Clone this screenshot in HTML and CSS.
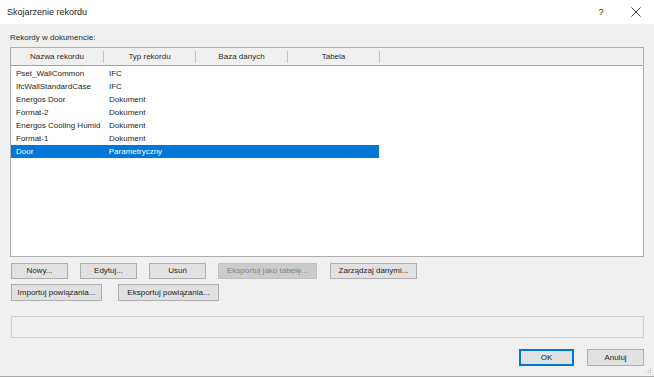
FILE: index.html
```html
<!DOCTYPE html>
<html lang="pl">
<head>
  <meta charset="UTF-8" />
  <title>Skojarzenie rekordu</title>
  <link rel="stylesheet" href="styles.css">
</head>
<body>
  <div class="window">
    <div class="titlebar">
      <span class="title">Skojarzenie rekordu</span>
      <span class="help">?</span>
      <span class="close">
        <svg width="10" height="10" viewBox="0 0 10 10">
          <path d="M0.5 0.5 L9.5 9.5 M9.5 0.5 L0.5 9.5" stroke="#222" stroke-width="0.9" fill="none"/>
        </svg>
      </span>
    </div>

    <div class="content">
      <div class="label">Rekordy w dokumencie:</div>

      <div class="listview">
        <div class="lv-header">
          <div class="col c1">Nazwa rekordu</div>
          <div class="col">Typ rekordu</div>
          <div class="col">Baza danych</div>
          <div class="col">Tabela</div>
        </div>
        <div class="lv-rows">
          <div class="row"><div class="cell c1">Pset_WallCommon</div><div class="cell">IFC</div></div>
          <div class="row"><div class="cell c1">IfcWallStandardCase</div><div class="cell">IFC</div></div>
          <div class="row"><div class="cell c1">Energos Door</div><div class="cell">Dokument</div></div>
          <div class="row"><div class="cell c1">Format-2</div><div class="cell">Dokument</div></div>
          <div class="row"><div class="cell c1">Energos Cooling Humid</div><div class="cell">Dokument</div></div>
          <div class="row"><div class="cell c1">Format-1</div><div class="cell">Dokument</div></div>
          <div class="row selected"><div class="cell c1">Door</div><div class="cell">Parametryczny</div><div class="cell"></div><div class="cell"></div></div>
        </div>
      </div>

      <div class="btn-row first">
        <button class="btn w57">Nowy...</button>
        <button class="btn w57">Edytuj...</button>
        <button class="btn w57">Usuń</button>
        <button class="btn w99" disabled>Eksportuj jako tabelę...</button>
        <button class="btn w87 push">Zarządzaj danymi...</button>
      </div>

      <div class="btn-row second">
        <button class="btn w91">Importuj powiązania...</button>
        <button class="btn w101">Eksportuj powiązania...</button>
      </div>

      <div class="status"></div>

      <div class="dialog-buttons">
        <button class="btn default">OK</button>
        <button class="btn cancel">Anuluj</button>
      </div>

      <svg class="grip" width="7" height="7" viewBox="0 0 7 7">
        <rect x="5" y="1" width="1" height="1" fill="#b8b8b8"/>
        <rect x="3" y="3" width="1" height="1" fill="#b8b8b8"/>
        <rect x="5" y="3" width="1" height="1" fill="#b8b8b8"/>
        <rect x="1" y="5" width="1" height="1" fill="#b8b8b8"/>
        <rect x="3" y="5" width="1" height="1" fill="#b8b8b8"/>
        <rect x="5" y="5" width="1" height="1" fill="#b8b8b8"/>
      </svg>
    </div>
  </div>
</body>
</html>
```

FILE: styles.css
```css
html, body {
  margin: 0;
  padding: 0;
  background-color: #ffffff;
  font-family: "Liberation Sans", Arial, sans-serif;
  font-size: 8px;
  color: #1e1e1e;
  overflow: hidden;
}

.window {
  width: 654px;
  height: 376px;
  display: flex;
  flex-direction: column;
  border-bottom: 1px solid #a9a9a9;
}

.titlebar {
  height: 24px;
  flex: none;
  display: flex;
  align-items: center;
  background-color: #ffffff;
  padding-left: 7px;
}

.title {
  font-size: 9px;
  flex: 1;
}

.help {
  font-size: 9px;
  width: 10px;
  margin-right: 25px;
  text-align: center;
}

.close {
  display: flex;
  margin-right: 13px;
}

.content {
  position: relative;
  flex: 1;
  background-color: #f0f0f0;
  padding: 8px 10px 0 10px;
}

.label {
  line-height: 12px;
  color: #2a2a2a;
}

.listview {
  margin-top: 3px;
  height: 208px;
  border: 1px solid #adadad;
  background-color: #ffffff;
}

.lv-header {
  display: flex;
  height: 17px;
  background-color: #f0f0f0;
  border-bottom: 1px solid #a0a0a0;
  align-items: center;
}

.lv-header .col {
  width: 91px;
  height: 12px;
  line-height: 12px;
  text-align: center;
  border-right: 1px solid #c4c4c4;
  color: #2a2a2a;
}

.lv-header .col.c1 {
  width: 92px;
}

.lv-rows {
  padding-top: 1px;
}

.row {
  display: flex;
  height: 13px;
  line-height: 13px;
  width: 368px;
}

.cell {
  width: 87px;
  padding-left: 5px;
  white-space: nowrap;
  overflow: hidden;
}

.cell.c1 {
  width: 88px;
}

.row.selected {
  background-color: #0078d7;
  color: #ffffff;
}

.btn-row {
  display: flex;
  padding-left: 1px;
}

.btn-row.first {
  margin-top: 6px;
  gap: 12px;
}

.btn-row.second {
  margin-top: 5px;
  gap: 16px;
}

.btn {
  font-family: inherit;
  font-size: 8px;
  color: #1e1e1e;
  background-color: #e1e1e1;
  border: 1px solid #adadad;
  border-radius: 0;
  padding: 0;
  height: 16px;
  line-height: 14px;
  text-align: center;
}

.btn-row.second .btn {
  height: 17px;
}

.btn:disabled {
  background-color: #cccccc;
  border-color: #bfbfbf;
  color: #838383;
}

.btn.push {
  margin-left: 1px;
}

.w57 { width: 57px; }
.w87 { width: 87px; }
.w91 { width: 91px; }
.w99 { width: 99px; }
.w101 { width: 101px; }

.status {
  margin-top: 15px;
  margin-left: 1px;
  height: 20px;
  border: 1px solid #d0d0d0;
}

.dialog-buttons {
  display: flex;
  justify-content: flex-end;
  gap: 13px;
  margin-top: 11px;
}

.dialog-buttons .btn {
  height: 17px;
}

.btn.default {
  width: 55px;
  border-color: #0078d7;
  box-shadow: inset 0 0 0 1px #0078d7;
}

.btn.cancel {
  width: 57px;
}

.grip {
  position: absolute;
  right: 2px;
  bottom: 2px;
}
```
